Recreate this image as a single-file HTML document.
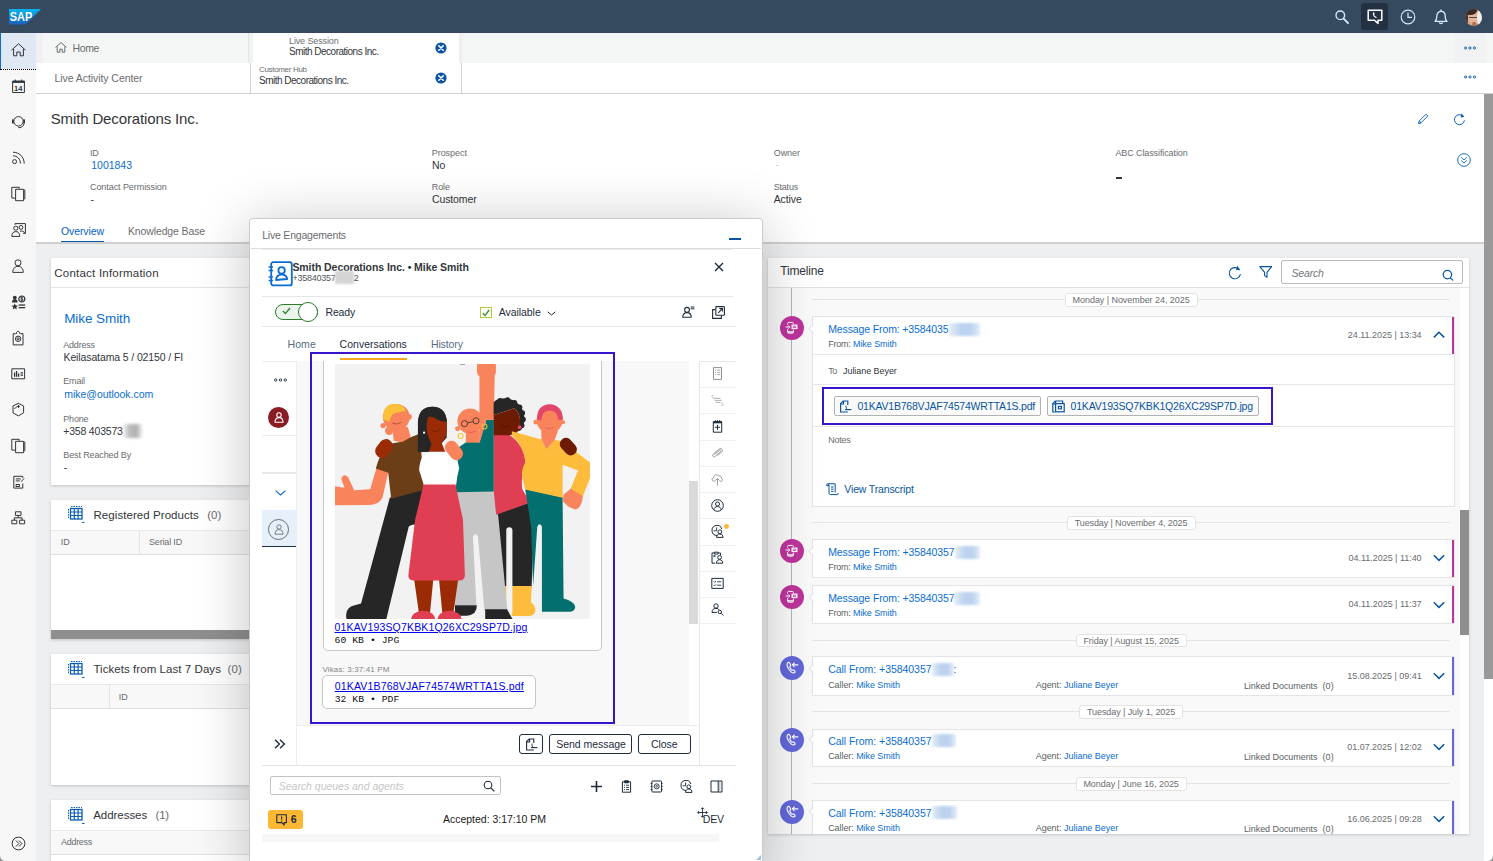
<!DOCTYPE html>
<html lang="en">
<head>
<meta charset="utf-8">
<title>Smith Decorations Inc.</title>
<style>
*{box-sizing:border-box;margin:0;padding:0}
html,body{width:1493px;height:861px;overflow:hidden;background:#fff}
body{font-family:"Liberation Sans",sans-serif;color:#32363a;font-size:12px;position:relative}
.abs{position:absolute}
.t{position:absolute;white-space:nowrap;line-height:1}
.lbl{color:#6a6d70;font-size:10px}
.val{color:#32363a;font-size:12px}
.lnk{color:#0a6ed1}
svg{position:absolute;overflow:visible}
#shell{left:0;top:0;width:1493px;height:33px;background:#354a5f}
#side{left:0;top:33px;width:36px;height:828px;background:#f7f7f7}
#tabs1{left:36px;top:33px;width:1457px;height:30px;background:#f4f6f6}
#tabs2{left:36px;top:63px;width:1457px;height:31px;background:#fff;border-bottom:1px solid #d0d0d0}
#hdr{left:36px;top:94px;width:1449px;height:148px;background:#fff}
#content{left:36px;top:243px;width:1449px;height:618px;background:#edeff0}
.card{position:absolute;background:#fff;box-shadow:0 0 2px rgba(0,0,0,.12)}
</style>
</head>
<body>
<div id="shell" class="abs"></div>
<div id="side" class="abs"></div>
<div id="tabs1" class="abs"></div>
<div id="tabs2" class="abs"></div>
<div id="hdr" class="abs"></div>
<div id="content" class="abs"></div>
<!-- shell bar -->
<svg class="abs" style="left:9px;top:9px" width="32" height="16" viewBox="0 0 32 16">
<defs><linearGradient id="sapg" x1="0" y1="0" x2="0" y2="1"><stop offset="0" stop-color="#00b5f0"/><stop offset="1" stop-color="#1f60bd"/></linearGradient></defs>
<polygon points="0,0 32,0 16.5,15.5 0,15.5" fill="url(#sapg)"/>
<text x=".8" y="12.300" font-family="Liberation Sans, sans-serif" font-weight="bold" font-size="12" fill="#fff" textLength="22.500" lengthAdjust="spacingAndGlyphs">SAP</text>
</svg>
<!-- search -->
<svg class="abs" style="left:1334px;top:9px" width="16" height="16" viewBox="0 0 16 16" fill="none" stroke="#d6e7fa" stroke-width="1.400"><circle cx="6.3" cy="6.3" r="4.3"/><path d="M9.6 9.6l4.4 4.4" stroke-linecap="round" stroke-width="1.8"/></svg>
<!-- active chat button -->
<div class="abs" style="left:1361px;top:3px;width:27px;height:27px;border-radius:3px;background:#233142"></div>
<svg class="abs" style="left:1367px;top:9px" width="16" height="16" viewBox="0 0 16 16"><path d="M1.2 1.2h13.6v10H11l-0 3.2-3.6-3.2H1.2z" fill="none" stroke="#fff" stroke-width="1.5" stroke-linejoin="round"/><path d="M6.800 3c-1.100.3-1.300 2.200-.4 3.800.9 1.600 2.400 2.600 3.400 2l-.8-1.400c-.5.200-1 0-1.400-.7-.4-.700-.4-1.400.1-1.700z" fill="#fff"/></svg>
<!-- clock -->
<svg class="abs" style="left:1400px;top:9px" width="16" height="16" viewBox="0 0 16 16" fill="none" stroke="#d6e7fa" stroke-width="1.200"><circle cx="8" cy="8" r="6.8"/><path d="M8 3.600v4.700h4" /></svg>
<!-- bell -->
<svg class="abs" style="left:1433px;top:9px" width="16" height="16" viewBox="0 0 16 16" fill="none" stroke="#d6e7fa" stroke-width="1.300"><path d="M2 12.300c1.500-1 1.800-2.500 1.800-5.300 0-2.700 1.800-4.600 4.200-4.600s4.200 1.900 4.200 4.600c0 2.800.3 4.300 1.800 5.300z" stroke-linejoin="round"/><path d="M6.400 13.800c.3.900 2.900.9 3.200 0" stroke-linecap="round"/><path d="M8 1v1.200" stroke-linecap="round"/></svg>
<!-- avatar -->
<div class="abs" style="left:1465px;top:9px;width:17px;height:17px;border-radius:50%;overflow:hidden;background:#c9977c">
<div class="abs" style="left:0;top:0;width:17px;height:17px;background:radial-gradient(ellipse 7px 8px at 8px 9px,#e2b59c 0 60%,rgba(226,181,156,0) 100%)"></div>
<div class="abs" style="left:-2px;top:-3px;width:14px;height:9px;border-radius:50%;background:#3a2822"></div>
<div class="abs" style="left:-3px;top:0;width:6px;height:17px;border-radius:40%;background:#4a352c"></div>
<div class="abs" style="left:12px;top:-1px;width:7px;height:19px;border-radius:45% 0 0 45%;background:#f1eeea"></div>
<div class="abs" style="left:4px;top:7.500px;width:8px;height:1px;background:#5b463d"></div>
<div class="abs" style="left:7px;top:13px;width:4px;height:4px;background:#b5694f;border-radius:50%"></div>
</div>
<!-- sidebar -->
<div class="abs" style="left:0;top:33px;width:36px;height:36px;background:#e0e8f3;border-left:1.5px solid #0a6ed1"></div>
<div class="abs" style="left:0;top:69px;width:36px;height:0;border-top:1px dotted #000"></div>
<svg class="abs" style="left:0;top:33px" width="36" height="828" viewBox="0 0 36 828" fill="none" stroke="#2f3439" stroke-width="1" stroke-linejoin="round">
<!-- home (center y 50-33=17) -->
<g transform="translate(11,10)"><path d="M.5 7.200L7.500.800l7 6.400"/><path d="M2.600 6v6.800h3.200V9h3.400v3.800h3.200V6"/></g>
<!-- calendar center y 86-33=53 -->
<g transform="translate(12,46.500)"><rect x=".6" y="1.600" width="11.800" height="11.400"/><path d="M.6 2.400h11.800" stroke-width="2"/><path d="M3.300 0v2M9.700 0v2"/><text x="2" y="11.200" font-family="Liberation Sans, sans-serif" font-size="7.500" font-weight="bold" fill="#2f3439" stroke="none" textLength="8.500">14</text></g>
<!-- headset center y 122-33=89 -->
<g transform="translate(11,82)"><circle cx="7.500" cy="6.300" r="4.700"/><rect x="1" y="4.300" width="1.800" height="4.200" rx=".6" fill="#2f3439" stroke="none"/><rect x="12.200" y="4.300" width="1.800" height="4.200" rx=".6" fill="#2f3439" stroke="none"/><path d="M13 8.600c-.4 2.600-2.200 3.900-4.600 3.900"/><circle cx="8" cy="12.500" r=".8" fill="#2f3439" stroke="none"/></g>
<!-- feed center y 158-33=125 -->
<g transform="translate(12,118)"><circle cx="2.600" cy="10.600" r="2"/><path d="M1 4.800c4.200 0 7.400 3.200 7.400 7.800"/><path d="M1 1.200c6.300 0 11.200 4.900 11.200 11.400"/></g>
<!-- copy docs center y 194-33=161 -->
<g transform="translate(11,153.500)"><path d="M4.200 11.600H.8V.8h7.400v1.400"/><rect x="4.600" y="2.800" width="8" height="11.400"/><path d="M13.800 3v9.800" stroke="#2f3439"/></g>
<!-- group center y 230-33=197 -->
<g transform="translate(11,190)"><path d="M4 1.800V.6h10.400v9.800h-2.200"/><circle cx="4.800" cy="5.200" r="2.100"/><path d="M.8 13.400c0-3.200 1.600-4.800 4-4.800s4 1.600 4 4.800z"/><circle cx="10" cy="4.400" r="1.900"/><path d="M9 8.200c2.400-.8 4.400.4 4.800 2.600"/></g>
<!-- person center y 266-33=233 -->
<g transform="translate(12,226)"><circle cx="6" cy="3.800" r="3"/><path d="M.8 13.400c0-4 2-6 5.200-6s5.200 2 5.200 6z"/></g>
<!-- competitor center y 302-33=269 -->
<g transform="translate(11,262)" fill="#2f3439" stroke="none"><circle cx="3.800" cy="2.600" r="1.900"/><path d="M.9 7.600c0-2.400 1.300-3.600 2.900-3.600s2.900 1.200 2.900 3.600z"/><circle cx="10.800" cy="4" r="3" fill="none" stroke="#2f3439" stroke-width="1.200"/><path d="M9.400 4.900c1 1 2.600.6 2.600-.3 0-1.200-2.400-.6-2.400-1.700 0-.9 1.600-1.200 2.400-.300M10.800 1.400v5.200" fill="none" stroke="#2f3439" stroke-width=".9"/><path d="M3.800 8.400l1 2.100 2.300.2-1.800 1.500.6 2.200-2.100-1.200-2.100 1.200.6-2.200L.5 10.700l2.300-.2z"/><rect x="7.600" y="9.400" width="6.600" height="1.300"/><rect x="7.600" y="12" width="6.600" height="1.300"/></g>
<!-- badge center y 338-33=305 -->
<g transform="translate(12,297.500)"><path d="M3.600 3.200H1.200v11.200h9.800V3.200H8.600"/><path d="M4.200 3.600c0-1.600.8-2.800 1.900-2.800s1.900 1.200 1.900 2.800"/><circle cx="6.100" cy="8.300" r="2.700"/><circle cx="6.100" cy="8.300" r="1.100"/></g>
<!-- chart center y 374-33=341 -->
<g transform="translate(11,335)"><rect x=".8" y=".8" width="12.800" height="10"/><path d="M3.600 8.800V4.400M5.600 8.800V3M7.600 8.800V5.400" stroke-width="1.300"/><path d="M9.600 4.800h2.400M9.600 7.200h2.400" stroke-width="1.300"/></g>
<!-- product center y 410-33=377 -->
<g transform="translate(12,369.500)"><path d="M6.300.8l5.300 2.700v6.800l-5.300 3.100L1 10.300V3.500z"/><path d="M2.600 6.400c1.200-2 2.800-2.800 4.800-2.400M5.800 2.600l1.800 1.400-1.600 1.400" stroke-width="1"/></g>
<!-- copy center y 446-33=413 -->
<g transform="translate(11,405.500)"><path d="M4.200 11.600H.8V.8h7.400v1.400"/><rect x="4.600" y="2.800" width="8" height="11.400"/><path d="M13.800 3v9.800"/></g>
<!-- request center y 482-33=449 -->
<g transform="translate(13,442.500)"><path d="M9.800 8v4.600H.8V.8h9v1.600"/><path d="M2.800 3.400h5M2.800 5.400h4"/><path d="M3 9h3.600v2H3z" stroke-width="1"/><path d="M8.200 6.200l3-3.400" stroke-width="1"/></g>
<!-- org center y 518-33=485 -->
<g transform="translate(11,478)"><rect x="4.400" y=".8" width="5.600" height="3.600"/><rect x=".8" y="9.200" width="5" height="3.600"/><rect x="8.600" y="9.200" width="5" height="3.600"/><path d="M7.200 4.400v2.400M3.300 9.200V6.800h7.800v2.400"/></g>
<!-- expand center y 843-33=810, x 18 -->
<g transform="translate(11.500,803.500)"><circle cx="7" cy="7" r="6.400" stroke-width="1"/><path d="M4.400 4l3 3-3 3M7.400 4l3 3-3 3" stroke-width="1"/></g>
</svg>
<div class="abs" style="left:36px;top:33px;width:6px;height:30px;background:#eef0f1;"></div>
<div class="abs" style="left:248px;top:33px;width:1px;height:30px;background:#e3e5e6;"></div>
<div class="abs" style="left:249px;top:33px;width:4px;height:30px;background:#f0f2f3;"></div>
<div class="abs" style="left:253px;top:33px;width:206px;height:30px;background:#fff;"></div>
<div class="abs" style="left:459px;top:33px;width:3px;height:30px;background:#eef0f1;"></div>
<svg class="abs" style="left:54.500px;top:41.500px" width="12" height="11" viewBox="0 0 12 11" fill="none" stroke="#6a6d70" stroke-width="1" stroke-linejoin="round"><path d="M.5 5.400L6 .6l5.500 4.800"/><path d="M2.200 4.600v5.600h2.600V7.200h2.400v3h2.600V4.600"/></svg>
<div class="t" style="left:72.6px;top:43.00px;font-size:10.5px;color:#6a6d70;letter-spacing:-0.402px;">Home</div>
<div class="t" style="left:289.0px;top:37.00px;font-size:9px;color:#6a6d70;letter-spacing:-0.127px;">Live Session</div>
<div class="t" style="left:289.0px;top:47.00px;font-size:10px;color:#32363a;letter-spacing:-0.504px;">Smith Decorations Inc.</div>
<svg class="abs" style="left:435px;top:41.8px" width="12" height="12" viewBox="0 0 12 12"><circle cx="6" cy="6" r="5.600" fill="#0854a0"/><path d="M3.800 3.800l4.400 4.400M8.200 3.800l-4.400 4.400" stroke="#fff" stroke-width="1.600" stroke-linecap="round"/></svg>
<svg class="abs" style="left:435px;top:71.8px" width="12" height="12" viewBox="0 0 12 12"><circle cx="6" cy="6" r="5.600" fill="#0854a0"/><path d="M3.800 3.800l4.400 4.400M8.200 3.800l-4.400 4.400" stroke="#fff" stroke-width="1.600" stroke-linecap="round"/></svg>
<div class="abs" style="left:250px;top:63px;width:1px;height:30px;background:#d5d5d5;"></div>
<div class="abs" style="left:461px;top:63px;width:1px;height:30px;background:#d5d5d5;"></div>
<div class="t" style="left:54.5px;top:73.00px;font-size:10.5px;color:#6a6d70;letter-spacing:-0.064px;">Live Activity Center</div>
<div class="t" style="left:259.0px;top:66.00px;font-size:8px;color:#6a6d70;letter-spacing:-0.323px;">Customer Hub</div>
<div class="t" style="left:259.0px;top:76.00px;font-size:10px;color:#32363a;letter-spacing:-0.504px;">Smith Decorations Inc.</div>
<div class="abs" style="left:1455px;top:33px;width:30px;height:30px;background:#f0f2f3;"></div>
<svg class="abs" style="left:1463.5px;top:46.2px" width="12" height="4" viewBox="0 0 12 4" fill="none" stroke="#0854a0" stroke-width=".9"><circle cx="1.6" cy="2" r="1.100"/><circle cx="6" cy="2" r="1.100"/><circle cx="10.4" cy="2" r="1.100"/></svg>
<svg class="abs" style="left:1463.5px;top:75.4px" width="12" height="4" viewBox="0 0 12 4" fill="none" stroke="#0854a0" stroke-width=".9"><circle cx="1.6" cy="2" r="1.100"/><circle cx="6" cy="2" r="1.100"/><circle cx="10.4" cy="2" r="1.100"/></svg>
<div class="t" style="left:50.7px;top:111.00px;font-size:15px;color:#32363a;letter-spacing:-0.131px;">Smith Decorations Inc.</div>
<div class="t" style="left:90.0px;top:149.00px;font-size:9px;color:#6a6d70;letter-spacing:-0.250px;">ID</div>
<div class="t" style="left:91.3px;top:160.00px;font-size:10.5px;color:#0a6ed1;letter-spacing:-0.025px;">1001843</div>
<div class="t" style="left:90.0px;top:183.00px;font-size:9px;color:#6a6d70;letter-spacing:-0.074px;">Contact Permission</div>
<div class="t" style="left:90.5px;top:194.00px;font-size:10.5px;color:#32363a;">-</div>
<div class="t" style="left:431.7px;top:149.00px;font-size:9px;color:#6a6d70;letter-spacing:-0.027px;">Prospect</div>
<div class="t" style="left:432.0px;top:160.00px;font-size:10.5px;color:#32363a;letter-spacing:0.039px;">No</div>
<div class="t" style="left:431.7px;top:183.00px;font-size:9px;color:#6a6d70;letter-spacing:-0.052px;">Role</div>
<div class="t" style="left:432.0px;top:194.00px;font-size:10.5px;color:#32363a;letter-spacing:-0.126px;">Customer</div>
<div class="t" style="left:773.7px;top:149.00px;font-size:9px;color:#6a6d70;letter-spacing:-0.041px;">Owner</div>
<div class="t" style="left:775.5px;top:161.00px;font-size:9px;color:#9cc3e8;">-</div>
<div class="t" style="left:773.7px;top:183.00px;font-size:9px;color:#6a6d70;letter-spacing:-0.202px;">Status</div>
<div class="t" style="left:773.7px;top:194.00px;font-size:10.5px;color:#32363a;letter-spacing:-0.099px;">Active</div>
<div class="t" style="left:1115.4px;top:149.00px;font-size:9px;color:#6a6d70;letter-spacing:-0.101px;">ABC Classification</div>
<div class="abs" style="left:1116px;top:177px;width:6px;height:2px;background:#32363a;"></div>
<svg class="abs" style="left:1417px;top:113px" width="12" height="12" viewBox="0 0 12 12" fill="none" stroke="#0a5cb8" stroke-width=".9"><path d="M1.600 10.400l.6-2.400L9 1.200l1.800 1.800L4 9.800z" stroke-linejoin="round"/><path d="M1.600 10.400l2.400-.6" /><path d="M2.400 8l1.600 1.600" /></svg>
<svg class="abs" style="left:1453px;top:112.500px" width="13" height="13" viewBox="0 0 13 13" fill="none" stroke="#0a5cb8" stroke-width="1"><path d="M10.800 4.200A5 5 0 1 0 11.400 7.400" /><path d="M8.600 .6l2.600 3.200-3.600.8" fill="#0854a0" stroke="none"/></svg>
<svg class="abs" style="left:1457px;top:153px" width="14" height="14" viewBox="0 0 14 14" fill="none" stroke="#0a5cb8" stroke-width=".9"><circle cx="7" cy="7" r="6.300"/><path d="M4.200 4.400l2.800 2.600 2.800-2.600M4.200 7.400l2.800 2.600 2.800-2.600"/></svg>
<div class="t" style="left:61.0px;top:226.00px;font-size:10.5px;color:#0a62c4;letter-spacing:-0.095px;">Overview</div>
<div class="abs" style="left:61px;top:240.5px;width:43px;height:1.5px;background:#0a5cb8;"></div>
<div class="t" style="left:128.0px;top:226.00px;font-size:10.5px;color:#6a6d70;letter-spacing:-0.129px;">Knowledge Base</div>
<div class="abs" style="left:36px;top:242px;width:1449px;height:1.5px;background:#cfcfcf;"></div>
<div class="abs" style="left:51px;top:258px;width:300px;height:227px;background:#fff;box-shadow:0 1px 3px rgba(0,0,0,.18);"></div>
<div class="t" style="left:54.3px;top:268.00px;font-size:11.5px;color:#32363a;letter-spacing:0.219px;">Contact Information</div>
<div class="abs" style="left:51px;top:287px;width:300px;height:1px;background:#e4e4e4;"></div>
<div class="t" style="left:64.2px;top:312.00px;font-size:13.5px;color:#0a6ed1;letter-spacing:-0.076px;">Mike Smith</div>
<div class="t" style="left:63.3px;top:341.00px;font-size:9px;color:#6a6d70;letter-spacing:-0.216px;">Address</div>
<div class="t" style="left:63.5px;top:352.00px;font-size:10.5px;color:#32363a;letter-spacing:-0.118px;">Keilasatama 5 / 02150 / FI</div>
<div class="t" style="left:63.3px;top:377.00px;font-size:9px;color:#6a6d70;letter-spacing:-0.201px;">Email</div>
<div class="t" style="left:64.2px;top:389.00px;font-size:10.5px;color:#0a6ed1;letter-spacing:-0.027px;">mike@outlook.com</div>
<div class="t" style="left:63.3px;top:415.00px;font-size:9px;color:#6a6d70;letter-spacing:-0.205px;">Phone</div>
<div class="t" style="left:63.3px;top:426.00px;font-size:10.5px;color:#32363a;letter-spacing:-0.200px;">+358 403573</div>
<div class="abs" style="left:122px;top:424px;width:21px;height:14px;background:linear-gradient(90deg,rgba(200,200,200,.0),#bdbdbd 35%,#b0b0b0 70%,rgba(200,200,200,0));filter:blur(1.500px)"></div>
<div class="t" style="left:63.3px;top:451.00px;font-size:9px;color:#6a6d70;letter-spacing:-0.122px;">Best Reached By</div>
<div class="t" style="left:63.8px;top:462.00px;font-size:10.5px;color:#32363a;">-</div>
<div class="abs" style="left:51px;top:500px;width:300px;height:139px;background:#fff;box-shadow:0 1px 3px rgba(0,0,0,.18);"></div>
<svg class="abs" style="left:67.5px;top:506px" width="17" height="18" viewBox="0 0 17 18" fill="none" stroke="#0b5cb3"><path d="M3 .5h11" stroke-width="1" stroke-dasharray="1.500 1"/><path d="M.5 3v10" stroke-width="1" stroke-dasharray="1.500 1"/><rect x="2.500" y="2.500" width="11.500" height="10.500" stroke-width="1.300"/><path d="M6.300 2.500v10.500M10.100 2.500v10.500M2.500 6v0h11.500M2.500 9.500h11.500" stroke-width="1.200"/><path d="M14 16.500h2.500" stroke-width="1"/></svg>
<div class="t" style="left:93.5px;top:510.00px;font-size:11.5px;color:#32363a;letter-spacing:0.064px;">Registered Products</div>
<div class="t" style="left:207.2px;top:510.00px;font-size:11.5px;color:#6a6d70;letter-spacing:-0.018px;">(0)</div>
<div class="abs" style="left:51px;top:530px;width:300px;height:25px;background:#f8f8f8;border-top:1px solid #e8e8e8;border-bottom:1px solid #e0e0e0;"></div>
<div class="abs" style="left:139px;top:531px;width:1px;height:23px;background:#e4e4e4;"></div>
<div class="t" style="left:60.8px;top:538.00px;font-size:9px;color:#6a6d70;letter-spacing:-0.150px;">ID</div>
<div class="t" style="left:149.0px;top:538.00px;font-size:9px;color:#6a6d70;letter-spacing:-0.168px;">Serial ID</div>
<div class="abs" style="left:51px;top:630px;width:300px;height:9px;background:#8f8f8f;"></div>
<div class="abs" style="left:51px;top:654px;width:300px;height:131px;background:#fff;box-shadow:0 1px 3px rgba(0,0,0,.18);"></div>
<svg class="abs" style="left:67.5px;top:661px" width="17" height="18" viewBox="0 0 17 18" fill="none" stroke="#0b5cb3"><path d="M3 .5h11" stroke-width="1" stroke-dasharray="1.500 1"/><path d="M.5 3v10" stroke-width="1" stroke-dasharray="1.500 1"/><rect x="2.500" y="2.500" width="11.500" height="10.500" stroke-width="1.300"/><path d="M6.300 2.500v10.500M10.100 2.500v10.500M2.500 6v0h11.500M2.500 9.500h11.500" stroke-width="1.200"/><path d="M14 16.500h2.500" stroke-width="1"/></svg>
<div class="t" style="left:93.4px;top:664.00px;font-size:11.5px;color:#32363a;letter-spacing:0.062px;">Tickets from Last 7 Days</div>
<div class="t" style="left:227.4px;top:664.00px;font-size:11.5px;color:#6a6d70;letter-spacing:0.182px;">(0)</div>
<div class="abs" style="left:51px;top:684px;width:300px;height:25px;background:#f8f8f8;border-top:1px solid #e8e8e8;border-bottom:1px solid #e0e0e0;"></div>
<div class="abs" style="left:109px;top:685px;width:1px;height:23px;background:#e4e4e4;"></div>
<div class="t" style="left:118.8px;top:693.00px;font-size:9px;color:#6a6d70;letter-spacing:-0.150px;">ID</div>
<div class="abs" style="left:51px;top:800px;width:300px;height:70px;background:#fff;box-shadow:0 1px 3px rgba(0,0,0,.18);"></div>
<svg class="abs" style="left:67.5px;top:806.5px" width="17" height="18" viewBox="0 0 17 18" fill="none" stroke="#0b5cb3"><path d="M3 .5h11" stroke-width="1" stroke-dasharray="1.500 1"/><path d="M.5 3v10" stroke-width="1" stroke-dasharray="1.500 1"/><rect x="2.500" y="2.500" width="11.500" height="10.500" stroke-width="1.300"/><path d="M6.300 2.500v10.500M10.100 2.500v10.500M2.500 6v0h11.500M2.500 9.500h11.500" stroke-width="1.200"/><path d="M14 16.500h2.500" stroke-width="1"/></svg>
<div class="t" style="left:93.2px;top:810.00px;font-size:11.5px;color:#32363a;letter-spacing:-0.037px;">Addresses</div>
<div class="t" style="left:155.5px;top:810.00px;font-size:11.5px;color:#6a6d70;letter-spacing:-0.184px;">(1)</div>
<div class="abs" style="left:51px;top:830px;width:300px;height:25px;background:#f8f8f8;border-top:1px solid #e8e8e8;border-bottom:1px solid #e0e0e0;"></div>
<div class="t" style="left:61.0px;top:838.00px;font-size:9px;color:#6a6d70;letter-spacing:-0.288px;">Address</div>
<div class="abs" style="left:768px;top:258px;width:701px;height:576px;background:#f9f9f9;box-shadow:0 1px 3px rgba(0,0,0,.18);overflow:hidden;"></div>
<div class="abs" style="left:768px;top:258px;width:701px;height:29px;background:#fff;"></div>
<div class="abs" style="left:768px;top:287px;width:701px;height:1px;background:#e2e2e2;"></div>
<div class="t" style="left:780.3px;top:265.00px;font-size:12px;color:#32363a;letter-spacing:-0.187px;">Timeline</div>
<svg class="abs" style="left:1228px;top:265px" width="14" height="15" viewBox="0 0 14 15" fill="none" stroke="#0854a0" stroke-width="1.100"><path d="M11.600 5.200A5.600 5.600 0 1 0 12.400 9"/><path d="M9.200 .8l2.800 3.800-4 .6" fill="#0854a0" stroke="none"/></svg>
<svg class="abs" style="left:1259px;top:266px" width="14" height="12" viewBox="0 0 14 12" fill="none" stroke="#0854a0" stroke-width="1.100" stroke-linejoin="round"><path d="M.8.600h11.800L8 6.400v4.800L5.600 9.600V6.400z"/></svg>
<div class="abs" style="left:1281px;top:260px;width:182px;height:24px;background:#fff;border:1px solid #b9b9b9;border-radius:2px;"></div>
<div class="t" style="left:1291.5px;top:268.00px;font-size:10.5px;color:#74777a;font-style:italic;letter-spacing:-0.178px;">Search</div>
<svg class="abs" style="left:1442px;top:269px" width="12" height="12" viewBox="0 0 12 12" fill="none" stroke="#0854a0" stroke-width="1.200"><circle cx="5.400" cy="5.600" r="4.200"/><path d="M8.400 8.800l2.400 2.400" stroke-linecap="round"/></svg>
<div class="abs" style="left:1460px;top:288px;width:9px;height:546px;background:#fff;"></div>
<div class="abs" style="left:1460px;top:510px;width:9px;height:124.5px;background:#8f8f8f;"></div>
<div class="abs" style="left:791px;top:288px;width:1px;height:546px;background:#b2b5b7;"></div>
<div class="abs" style="left:812px;top:299px;width:638px;height:1px;background:#e4e4e4;"></div>
<div class="abs" style="left:1064.5px;top:292.5px;width:133.20000000000005px;height:14.199999999999989px;background:#fff;border:1px solid #e3e3e3;border-radius:3px;"></div>
<div class="t" style="left:1072.6px;top:296.00px;font-size:9px;color:#6a6d70;letter-spacing:-0.054px;">Monday | November 24, 2025</div>
<div class="abs" style="left:812px;top:316px;width:643px;height:190.5px;background:#fff;border:1px solid #e4e4e4;"></div>
<div class="abs" style="left:1452px;top:316.5px;width:2.2px;height:37px;background:#bd349c;"></div>
<div class="abs" style="left:780px;top:316px;width:24px;height:24px;border-radius:50%;background:#bd349c"></div>
<svg class="abs" style="left:785px;top:321px" width="14" height="14" viewBox="0 0 14 14" fill="none" stroke="#fff" stroke-width="1"><path d="M2.600 3.600V2.400c0-.6.400-1 1-1h3.800c.6 0 1 .4 1 1v.8M2.600 8v3.200c0 .6.400 1 1 1h3.800c.6 0 1-.4 1-1V8.600"/><path d="M2.600 10.200h5.800v1.400H2.600z" fill="#fff" stroke="none"/><path d="M.6 6h4M3.200 4.400L4.800 6 3.200 7.600"/><rect x="6.500" y="3.500" width="6" height="4.600" fill="#fff" stroke="none"/><path d="M7.800 5.200h3.400M7.800 6.600h3.400" stroke="#bd349c" stroke-width=".8"/></svg>
<svg class="abs" style="left:808px;top:323.5px" width="6" height="9" viewBox="0 0 6 9"><path d="M5.500 .3L1 4.500l4.500 4.200" fill="#fff" stroke="#dcdcdc" stroke-width="1"/><path d="M5.500 1v7" stroke="#fff" stroke-width="1.200"/></svg>
<div class="t" style="left:828.2px;top:324.00px;font-size:10.5px;color:#0a6ed1;letter-spacing:-0.121px;">Message From: +3584035</div>
<div class="abs" style="left:949px;top:323px;width:31px;height:13px;background:linear-gradient(90deg,#e4edf8,#b9d0ee 40%,#b9d0ee 70%,#e4edf8);filter:blur(1.300px);opacity:.95"></div>
<div class="t" style="left:828.2px;top:340.00px;font-size:9px;color:#5b5f63;letter-spacing:-0.239px;">From:</div>
<div class="t" style="left:853.0px;top:340.00px;font-size:9px;color:#0a6ed1;letter-spacing:-0.071px;">Mike Smith</div>
<div class="t" style="left:1347.8px;top:331.00px;font-size:9px;color:#6a6d70;letter-spacing:-0.024px;">24.11.2025 | 13:34</div>
<svg class="abs" style="left:1433px;top:331.2px" width="12" height="8" viewBox="0 0 12 8" fill="none" stroke="#0854a0" stroke-width="1.500"><path d="M.8 6.400L6 1.200l5.200 5.200"/></svg>
<div class="abs" style="left:813px;top:354px;width:641px;height:1px;background:#e6e6e6;"></div>
<div class="t" style="left:828.2px;top:367.00px;font-size:9px;color:#6a6d70;letter-spacing:-0.452px;">To</div>
<div class="t" style="left:843.0px;top:367.00px;font-size:9px;color:#32363a;letter-spacing:-0.056px;">Juliane Beyer</div>
<div class="abs" style="left:813px;top:384px;width:641px;height:1px;background:#e6e6e6;"></div>
<div class="abs" style="left:822px;top:387px;width:451px;height:38px;border:2px solid #3a14cc;"></div>
<div class="abs" style="left:834px;top:396px;width:207px;height:19.5px;background:#fafafa;border:1px solid #b2b2b2;border-radius:2px;"></div>
<svg class="abs" style="left:839px;top:399.500px" width="13" height="13" viewBox="0 0 13 13" fill="none" stroke="#0854a0" stroke-width="1.200"><path d="M8.800 12H1.600V3.600L4.200 1h4.600v4"/><path d="M4.600 1v3H1.600"/><path d="M6 9.600h6.400" /><path d="M7 5.600c0 1.800 0 2.800 1.200 3.800" stroke-width="1"/></svg>
<div class="t" style="left:857.4px;top:401.00px;font-size:10.5px;color:#0854a0;letter-spacing:-0.208px;">01KAV1B768VJAF74574WRTTA1S.pdf</div>
<div class="abs" style="left:1047px;top:396px;width:212px;height:19.5px;background:#fafafa;border:1px solid #b2b2b2;border-radius:2px;"></div>
<svg class="abs" style="left:1052px;top:399.500px" width="13" height="13" viewBox="0 0 13 13" fill="none" stroke="#0854a0" stroke-width="1.200"><path d="M3 12H.8V3.400L3.200 1h7.400v2"/><path d="M3.600 1v2.800H.8"/><rect x="3.600" y="3.600" width="8.600" height="8.200"/><rect x="5.800" y="5.800" width="4.200" height="3.600" fill="#0854a0" stroke="none"/><circle cx="7.900" cy="7.600" r=".9" fill="#fff" stroke="none"/></svg>
<div class="t" style="left:1070.5px;top:401.00px;font-size:10.5px;color:#0854a0;letter-spacing:-0.178px;">01KAV193SQ7KBK1Q26XC29SP7D.jpg</div>
<div class="abs" style="left:813px;top:426px;width:641px;height:1px;background:#e6e6e6;"></div>
<div class="t" style="left:828.2px;top:436.00px;font-size:9px;color:#6a6d70;letter-spacing:-0.242px;">Notes</div>
<svg class="abs" style="left:826px;top:482.500px" width="13" height="13" viewBox="0 0 13 13" fill="none" stroke="#0854a0" stroke-width="1"><path d="M3 2.600V10c0 1 .6 1.600 1.600 1.600h7M3 2.600C3 1.400 2.400.8 1.600.8S.6 1.400.6 2.600zM1.600.8h7.600v8.600"/><path d="M5 4h2.600M5 6.200h2.600M5 8.400h2.600"/><path d="M12 10v1.600" /></svg>
<div class="t" style="left:844.3px;top:484.00px;font-size:10.5px;color:#0854a0;letter-spacing:-0.145px;">View Transcript</div>
<div class="abs" style="left:812px;top:522px;width:638px;height:1px;background:#e4e4e4;"></div>
<div class="abs" style="left:1066.5px;top:515.8px;width:129.0999999999999px;height:13.800000000000068px;background:#fff;border:1px solid #e3e3e3;border-radius:3px;"></div>
<div class="t" style="left:1074.7px;top:519.00px;font-size:9px;color:#6a6d70;letter-spacing:-0.110px;">Tuesday | November 4, 2025</div>
<div class="abs" style="left:812px;top:539px;width:643px;height:38.5px;background:#fff;border:1px solid #e4e4e4;"></div>
<div class="abs" style="left:1452px;top:539.5px;width:2.2px;height:37.5px;background:#bd349c;"></div>
<div class="abs" style="left:780px;top:539px;width:24px;height:24px;border-radius:50%;background:#bd349c"></div>
<svg class="abs" style="left:785px;top:544px" width="14" height="14" viewBox="0 0 14 14" fill="none" stroke="#fff" stroke-width="1"><path d="M2.600 3.600V2.400c0-.6.400-1 1-1h3.800c.6 0 1 .4 1 1v.8M2.600 8v3.200c0 .6.400 1 1 1h3.800c.6 0 1-.4 1-1V8.600"/><path d="M2.600 10.200h5.800v1.400H2.600z" fill="#fff" stroke="none"/><path d="M.6 6h4M3.200 4.400L4.800 6 3.200 7.600"/><rect x="6.500" y="3.500" width="6" height="4.600" fill="#fff" stroke="none"/><path d="M7.800 5.200h3.400M7.800 6.600h3.400" stroke="#bd349c" stroke-width=".8"/></svg>
<svg class="abs" style="left:808px;top:546.5px" width="6" height="9" viewBox="0 0 6 9"><path d="M5.500 .3L1 4.500l4.500 4.200" fill="#fff" stroke="#dcdcdc" stroke-width="1"/><path d="M5.500 1v7" stroke="#fff" stroke-width="1.200"/></svg>
<div class="t" style="left:828.2px;top:547.00px;font-size:10.5px;color:#0a6ed1;letter-spacing:-0.104px;">Message From: +35840357</div>
<div class="abs" style="left:955px;top:546px;width:25px;height:13px;background:linear-gradient(90deg,#e4edf8,#b9d0ee 40%,#b9d0ee 70%,#e4edf8);filter:blur(1.300px);opacity:.95"></div>
<div class="t" style="left:828.2px;top:563.00px;font-size:9px;color:#5b5f63;letter-spacing:-0.239px;">From:</div>
<div class="t" style="left:853.0px;top:563.00px;font-size:9px;color:#0a6ed1;letter-spacing:-0.071px;">Mike Smith</div>
<div class="t" style="left:1348.5px;top:554.00px;font-size:9px;color:#6a6d70;letter-spacing:-0.026px;">04.11.2025 | 11:40</div>
<svg class="abs" style="left:1433px;top:554.4000000000001px" width="12" height="8" viewBox="0 0 12 8" fill="none" stroke="#0854a0" stroke-width="1.500"><path d="M.8 1.200L6 6.400l5.200-5.200"/></svg>
<div class="abs" style="left:812px;top:585px;width:643px;height:38.5px;background:#fff;border:1px solid #e4e4e4;"></div>
<div class="abs" style="left:1452px;top:585.5px;width:2.2px;height:37.5px;background:#bd349c;"></div>
<div class="abs" style="left:780px;top:585px;width:24px;height:24px;border-radius:50%;background:#bd349c"></div>
<svg class="abs" style="left:785px;top:590px" width="14" height="14" viewBox="0 0 14 14" fill="none" stroke="#fff" stroke-width="1"><path d="M2.600 3.600V2.400c0-.6.400-1 1-1h3.800c.6 0 1 .4 1 1v.8M2.600 8v3.200c0 .6.400 1 1 1h3.800c.6 0 1-.4 1-1V8.600"/><path d="M2.600 10.200h5.800v1.400H2.600z" fill="#fff" stroke="none"/><path d="M.6 6h4M3.200 4.400L4.800 6 3.200 7.600"/><rect x="6.500" y="3.500" width="6" height="4.600" fill="#fff" stroke="none"/><path d="M7.800 5.200h3.400M7.800 6.600h3.400" stroke="#bd349c" stroke-width=".8"/></svg>
<svg class="abs" style="left:808px;top:592.5px" width="6" height="9" viewBox="0 0 6 9"><path d="M5.500 .3L1 4.500l4.500 4.200" fill="#fff" stroke="#dcdcdc" stroke-width="1"/><path d="M5.500 1v7" stroke="#fff" stroke-width="1.200"/></svg>
<div class="t" style="left:828.2px;top:593.00px;font-size:10.5px;color:#0a6ed1;letter-spacing:-0.104px;">Message From: +35840357</div>
<div class="abs" style="left:954px;top:592px;width:26px;height:13px;background:linear-gradient(90deg,#e4edf8,#b9d0ee 40%,#b9d0ee 70%,#e4edf8);filter:blur(1.300px);opacity:.95"></div>
<div class="t" style="left:828.2px;top:609.00px;font-size:9px;color:#5b5f63;letter-spacing:-0.239px;">From:</div>
<div class="t" style="left:853.0px;top:609.00px;font-size:9px;color:#0a6ed1;letter-spacing:-0.071px;">Mike Smith</div>
<div class="t" style="left:1348.5px;top:600.00px;font-size:9px;color:#6a6d70;letter-spacing:-0.026px;">04.11.2025 | 11:37</div>
<svg class="abs" style="left:1433px;top:601.2px" width="12" height="8" viewBox="0 0 12 8" fill="none" stroke="#0854a0" stroke-width="1.500"><path d="M.8 1.200L6 6.400l5.200-5.200"/></svg>
<div class="abs" style="left:812px;top:640px;width:638px;height:1px;background:#e4e4e4;"></div>
<div class="abs" style="left:1075.5px;top:633.6px;width:111.20000000000005px;height:13.799999999999955px;background:#fff;border:1px solid #e3e3e3;border-radius:3px;"></div>
<div class="t" style="left:1083.4px;top:637.00px;font-size:9px;color:#6a6d70;letter-spacing:-0.083px;">Friday | August 15, 2025</div>
<div class="abs" style="left:812px;top:656px;width:643px;height:39.5px;background:#fff;border:1px solid #e4e4e4;"></div>
<div class="abs" style="left:1452px;top:656.5px;width:2.2px;height:38.5px;background:#6367d8;"></div>
<div class="abs" style="left:780px;top:656px;width:24px;height:24px;border-radius:50%;background:#6367d8"></div>
<svg class="abs" style="left:785px;top:661px" width="14" height="14" viewBox="0 0 14 14" fill="none" stroke="#fff" stroke-width="1.150" stroke-linecap="round" stroke-linejoin="round"><path d="M3 1.600c-1.400.5-1.300 3.400.7 6.400s4.400 4.300 5.800 3.700c.7-.4.800-1 .3-1.700L8.600 8.800c-.5.100-1 .6-1.500.4C6.200 8.800 4.800 6.600 4.800 5.600c.1-.6.800-.7 1-1.200L4.800 2.200C4.400 1.600 3.700 1.300 3 1.600z"/><path d="M7.400 3.800h5.400M9.200 2l-1.800 1.800 1.800 1.800"/></svg>
<svg class="abs" style="left:808px;top:663.5px" width="6" height="9" viewBox="0 0 6 9"><path d="M5.500 .3L1 4.500l4.500 4.200" fill="#fff" stroke="#dcdcdc" stroke-width="1"/><path d="M5.500 1v7" stroke="#fff" stroke-width="1.200"/></svg>
<div class="t" style="left:828.2px;top:664.00px;font-size:10.5px;color:#0a6ed1;letter-spacing:-0.044px;">Call From: +35840357</div>
<div class="abs" style="left:932px;top:662.8px;width:22px;height:13px;background:linear-gradient(90deg,#e4edf8,#b9d0ee 40%,#b9d0ee 70%,#e4edf8);filter:blur(1.300px);opacity:.95"></div>
<div class="t" style="left:828.2px;top:681.00px;font-size:9px;color:#5b5f63;letter-spacing:-0.072px;">Caller:</div>
<div class="t" style="left:856.2px;top:681.00px;font-size:9px;color:#0a6ed1;letter-spacing:-0.071px;">Mike Smith</div>
<div class="t" style="left:1035.8px;top:681.00px;font-size:9px;color:#5b5f63;letter-spacing:-0.086px;">Agent:</div>
<div class="t" style="left:1064.1px;top:681.00px;font-size:9px;color:#0a6ed1;letter-spacing:-0.041px;">Juliane Beyer</div>
<div class="t" style="left:1243.9px;top:682.00px;font-size:9px;color:#5b5f63;letter-spacing:-0.058px;">Linked Documents</div>
<div class="t" style="left:1322.5px;top:682.00px;font-size:9px;color:#5b5f63;letter-spacing:0.067px;">(0)</div>
<div class="t" style="left:1347.3px;top:672.00px;font-size:9px;color:#6a6d70;letter-spacing:-0.033px;">15.08.2025 | 09:41</div>
<svg class="abs" style="left:1433px;top:672.0px" width="12" height="8" viewBox="0 0 12 8" fill="none" stroke="#0854a0" stroke-width="1.500"><path d="M.8 1.200L6 6.400l5.200-5.200"/></svg>
<div class="t" style="left:953.5px;top:664.00px;font-size:10.5px;color:#0a6ed1;">:</div>
<div class="abs" style="left:812px;top:711px;width:638px;height:1px;background:#e4e4e4;"></div>
<div class="abs" style="left:1078.6px;top:705.4px;width:104.90000000000009px;height:13.899999999999977px;background:#fff;border:1px solid #e3e3e3;border-radius:3px;"></div>
<div class="t" style="left:1087.0px;top:708.00px;font-size:9px;color:#6a6d70;letter-spacing:-0.089px;">Tuesday | July 1, 2025</div>
<div class="abs" style="left:812px;top:728.5px;width:643px;height:38.0px;background:#fff;border:1px solid #e4e4e4;"></div>
<div class="abs" style="left:1452px;top:729.0px;width:2.2px;height:37.0px;background:#6367d8;"></div>
<div class="abs" style="left:780px;top:727.7px;width:24px;height:24px;border-radius:50%;background:#6367d8"></div>
<svg class="abs" style="left:785px;top:732.7px" width="14" height="14" viewBox="0 0 14 14" fill="none" stroke="#fff" stroke-width="1.150" stroke-linecap="round" stroke-linejoin="round"><path d="M3 1.600c-1.400.5-1.300 3.400.7 6.400s4.400 4.300 5.800 3.700c.7-.4.800-1 .3-1.700L8.600 8.800c-.5.100-1 .6-1.500.4C6.200 8.800 4.800 6.600 4.800 5.600c.1-.6.800-.7 1-1.200L4.800 2.200C4.400 1.600 3.700 1.300 3 1.600z"/><path d="M7.400 3.800h5.400M9.200 2l-1.800 1.800 1.800 1.800"/></svg>
<svg class="abs" style="left:808px;top:735.2px" width="6" height="9" viewBox="0 0 6 9"><path d="M5.500 .3L1 4.500l4.500 4.200" fill="#fff" stroke="#dcdcdc" stroke-width="1"/><path d="M5.500 1v7" stroke="#fff" stroke-width="1.200"/></svg>
<div class="t" style="left:828.2px;top:736.00px;font-size:10.5px;color:#0a6ed1;letter-spacing:-0.044px;">Call From: +35840357</div>
<div class="abs" style="left:932px;top:734.2px;width:24px;height:13px;background:linear-gradient(90deg,#e4edf8,#b9d0ee 40%,#b9d0ee 70%,#e4edf8);filter:blur(1.300px);opacity:.95"></div>
<div class="t" style="left:828.2px;top:752.00px;font-size:9px;color:#5b5f63;letter-spacing:-0.072px;">Caller:</div>
<div class="t" style="left:856.2px;top:752.00px;font-size:9px;color:#0a6ed1;letter-spacing:-0.071px;">Mike Smith</div>
<div class="t" style="left:1035.8px;top:752.00px;font-size:9px;color:#5b5f63;letter-spacing:-0.086px;">Agent:</div>
<div class="t" style="left:1064.1px;top:752.00px;font-size:9px;color:#0a6ed1;letter-spacing:-0.041px;">Juliane Beyer</div>
<div class="t" style="left:1243.9px;top:753.00px;font-size:9px;color:#5b5f63;letter-spacing:-0.058px;">Linked Documents</div>
<div class="t" style="left:1322.5px;top:753.00px;font-size:9px;color:#5b5f63;letter-spacing:0.067px;">(0)</div>
<div class="t" style="left:1347.3px;top:743.00px;font-size:9px;color:#6a6d70;letter-spacing:-0.033px;">01.07.2025 | 12:02</div>
<svg class="abs" style="left:1433px;top:742.8000000000001px" width="12" height="8" viewBox="0 0 12 8" fill="none" stroke="#0854a0" stroke-width="1.500"><path d="M.8 1.200L6 6.400l5.200-5.200"/></svg>
<div class="abs" style="left:812px;top:783px;width:638px;height:1px;background:#e4e4e4;"></div>
<div class="abs" style="left:1075.5px;top:776.9px;width:111.20000000000005px;height:13.800000000000068px;background:#fff;border:1px solid #e3e3e3;border-radius:3px;"></div>
<div class="t" style="left:1083.4px;top:780.00px;font-size:9px;color:#6a6d70;letter-spacing:-0.045px;">Monday | June 16, 2025</div>
<div class="abs" style="left:0;top:0;width:1493px;height:834px;overflow:hidden"><div class="abs" style="left:812px;top:800px;width:643px;height:45px;background:#fff;border:1px solid #e4e4e4;"></div>
<div class="abs" style="left:1452px;top:800.5px;width:2.2px;height:44px;background:#6367d8;"></div>
<div class="abs" style="left:780px;top:799.6px;width:24px;height:24px;border-radius:50%;background:#6367d8"></div>
<svg class="abs" style="left:785px;top:804.6px" width="14" height="14" viewBox="0 0 14 14" fill="none" stroke="#fff" stroke-width="1.150" stroke-linecap="round" stroke-linejoin="round"><path d="M3 1.600c-1.400.5-1.300 3.400.7 6.400s4.400 4.300 5.800 3.700c.7-.4.800-1 .3-1.700L8.600 8.800c-.5.100-1 .6-1.500.4C6.200 8.800 4.800 6.600 4.800 5.600c.1-.6.800-.7 1-1.200L4.800 2.200C4.400 1.600 3.700 1.300 3 1.600z"/><path d="M7.400 3.800h5.400M9.200 2l-1.800 1.800 1.800 1.800"/></svg>
<svg class="abs" style="left:808px;top:807.1px" width="6" height="9" viewBox="0 0 6 9"><path d="M5.500 .3L1 4.500l4.500 4.200" fill="#fff" stroke="#dcdcdc" stroke-width="1"/><path d="M5.500 1v7" stroke="#fff" stroke-width="1.200"/></svg>
<div class="t" style="left:828.2px;top:808.00px;font-size:10.5px;color:#0a6ed1;letter-spacing:-0.044px;">Call From: +35840357</div>
<div class="abs" style="left:932px;top:806.1px;width:25px;height:13px;background:linear-gradient(90deg,#e4edf8,#b9d0ee 40%,#b9d0ee 70%,#e4edf8);filter:blur(1.300px);opacity:.95"></div>
<div class="t" style="left:828.2px;top:824.00px;font-size:9px;color:#5b5f63;letter-spacing:-0.072px;">Caller:</div>
<div class="t" style="left:856.2px;top:824.00px;font-size:9px;color:#0a6ed1;letter-spacing:-0.071px;">Mike Smith</div>
<div class="t" style="left:1035.8px;top:824.00px;font-size:9px;color:#5b5f63;letter-spacing:-0.086px;">Agent:</div>
<div class="t" style="left:1064.1px;top:824.00px;font-size:9px;color:#0a6ed1;letter-spacing:-0.041px;">Juliane Beyer</div>
<div class="t" style="left:1243.9px;top:825.00px;font-size:9px;color:#5b5f63;letter-spacing:-0.058px;">Linked Documents</div>
<div class="t" style="left:1322.5px;top:825.00px;font-size:9px;color:#5b5f63;letter-spacing:0.067px;">(0)</div>
<div class="t" style="left:1347.3px;top:815.00px;font-size:9px;color:#6a6d70;letter-spacing:-0.033px;">16.06.2025 | 09:28</div>
<svg class="abs" style="left:1433px;top:815.2px" width="12" height="8" viewBox="0 0 12 8" fill="none" stroke="#0854a0" stroke-width="1.500"><path d="M.8 1.200L6 6.400l5.200-5.200"/></svg>
</div>
<div class="abs" style="left:249px;top:218px;width:514px;height:660px;background:#fff;border:1px solid #cbcbcb;border-radius:4px;box-shadow:0 6px 56px rgba(0,0,0,.24);"></div>
<div class="t" style="left:262.2px;top:230.00px;font-size:10.5px;color:#6a6d70;letter-spacing:-0.204px;">Live Engagements</div>
<div class="abs" style="left:729px;top:238px;width:12px;height:2px;background:#0854a0;"></div>
<div class="abs" style="left:251px;top:248px;width:510px;height:1px;background:#dcdcdc;"></div>
<div class="abs" style="left:262px;top:249px;width:471px;height:1px;background:#e8e8e8;"></div>
<svg class="abs" style="left:267.500px;top:260.500px" width="27" height="26" viewBox="0 0 27 26" fill="none" stroke="#0a6ed1" stroke-width="1.800" stroke-linejoin="round"><rect x="3.200" y="1.200" width="20.600" height="23.200" rx="2"/><path d="M.6 6h4.400M.6 9.500h4.400M.6 16h4.400M.6 19.500h4.400" stroke-width="1.300"/><circle cx="13.600" cy="9.400" r="3.200"/><path d="M8 19c.3-3.600 2.400-5.400 5.600-5.400s5.300 1.800 5.600 4.400z"/></svg>
<div class="t" style="left:292.4px;top:262.00px;font-size:10.5px;color:#32363a;font-weight:bold;letter-spacing:-0.063px;">Smith Decorations Inc. • Mike Smith</div>
<div class="t" style="left:292.4px;top:274.00px;font-size:9px;color:#515559;letter-spacing:-0.255px;">+35840357</div>
<div class="abs" style="left:335px;top:270.500px;width:19px;height:13px;background:#d4d4d4;filter:blur(1.200px)"></div>
<div class="t" style="left:353.8px;top:274.00px;font-size:9px;color:#515559;">2</div>
<svg class="abs" style="left:714px;top:262px" width="10" height="10" viewBox="0 0 10 10" fill="none" stroke="#1d2d3e" stroke-width="1.400"><path d="M1 1l8 8M9 1l-8 8"/></svg>
<div class="abs" style="left:262px;top:296px;width:471px;height:1px;background:#e5e5e5;"></div>
<div class="abs" style="left:275px;top:303.5px;width:43px;height:16px;background:#ebf5eb;border:1px solid #2b7d2b;border-radius:8px;"></div>
<svg class="abs" style="left:282px;top:306.500px" width="9" height="8" viewBox="0 0 9 8" fill="none" stroke="#2b7d2b" stroke-width="1.300"><path d="M1 4l2.400 2.600L8 1"/></svg>
<div class="abs" style="left:298px;top:301.5px;width:20px;height:20px;background:#fff;border:1px solid #2b7d2b;border-radius:50%;"></div>
<div class="t" style="left:325.5px;top:307.00px;font-size:10.5px;color:#1d2d3e;letter-spacing:-0.170px;">Ready</div>
<div class="abs" style="left:480px;top:307px;width:12px;height:11px;background:#fff;border:1px solid #b7c936;"></div>
<svg class="abs" style="left:482px;top:309px" width="8" height="8" viewBox="0 0 8 8" fill="none" stroke="#2b8d2b" stroke-width="1.300"><path d="M.8 4.200l2.200 2.400L7.200 1"/></svg>
<div class="t" style="left:498.7px;top:307.00px;font-size:10.5px;color:#1d2d3e;letter-spacing:-0.046px;">Available</div>
<svg class="abs" style="left:547px;top:310.500px" width="9" height="5" viewBox="0 0 9 5" fill="none" stroke="#1d2d3e" stroke-width="1"><path d="M.6.800L4.500 4l3.900-3.200"/></svg>
<svg class="abs" style="left:681.500px;top:305.500px" width="13" height="12" viewBox="0 0 13 12" fill="none" stroke="#1d2d3e" stroke-width="1.100"><circle cx="5" cy="3.800" r="2.400"/><path d="M.8 11.200c0-3 1.500-4.600 4.200-4.600s4.200 1.600 4.200 4.600z" stroke-linejoin="round"/><path d="M8.600 1h3.800M8.600 2.800h3.800" stroke-width="1"/></svg>
<svg class="abs" style="left:711.500px;top:305.500px" width="13" height="13" viewBox="0 0 13 13" fill="none" stroke="#1d2d3e" stroke-width="1.100"><path d="M3.200 3.600H.6v8.800h8.800V9.800"/><rect x="3.800" y=".6" width="8.600" height="8.600" rx=".8"/><path d="M6.200 6.800l4-4M7.400 2.600h3v3"/></svg>
<div class="abs" style="left:262px;top:326px;width:474px;height:1px;background:#e5e5e5;"></div>
<div class="t" style="left:287.5px;top:339.00px;font-size:10.5px;color:#556b82;letter-spacing:0.098px;">Home</div>
<div class="t" style="left:339.6px;top:339.00px;font-size:10.5px;color:#1d2d3e;letter-spacing:0.007px;">Conversations</div>
<div class="t" style="left:430.9px;top:339.00px;font-size:10.5px;color:#556b82;letter-spacing:-0.095px;">History</div>
<div class="abs" style="left:262px;top:361px;width:35px;height:404px;background:#fff;border-top:1px solid #ececec;"></div>
<div class="abs" style="left:296px;top:361px;width:1px;height:404px;background:#ececec;"></div>
<div class="abs" style="left:297px;top:361px;width:392px;height:364px;background:#f8f8f8;"></div>
<div class="abs" style="left:262px;top:435px;width:34px;height:1px;background:#ececec;"></div>
<div class="abs" style="left:262px;top:472px;width:34px;height:1.5px;background:#e9e9e9;"></div>
<svg class="abs" style="left:273.500px;top:378px" width="13" height="4" viewBox="0 0 13 4" fill="none" stroke="#1d2d3e" stroke-width=".9"><circle cx="1.7" cy="2" r="1.200"/><circle cx="6.5" cy="2" r="1.200"/><circle cx="11.3" cy="2" r="1.200"/></svg>
<div class="abs" style="left:268px;top:407px;width:21px;height:21px;background:#8a1b22;border-radius:50%;"></div>
<svg class="abs" style="left:273.500px;top:411.500px" width="10" height="11" viewBox="0 0 10 11" fill="none" stroke="#fff" stroke-width="1.100" stroke-linejoin="round"><circle cx="5" cy="3" r="2.200"/><path d="M1 10.200c0-3 1.400-4.600 4-4.600s4 1.600 4 4.600z"/></svg>
<svg class="abs" style="left:275px;top:489.500px" width="11" height="6" viewBox="0 0 11 6" fill="none" stroke="#0a6ed1" stroke-width="1.200"><path d="M.6.600L5.500 5l4.900-4.400"/></svg>
<div class="abs" style="left:262px;top:510px;width:34px;height:37px;background:#e5f0fa;border-bottom:1px solid #1d2d3e;"></div>
<div class="abs" style="left:268px;top:519px;width:21px;height:21px;border:1px solid #6a6d70;border-radius:50%;"></div>
<svg class="abs" style="left:273.500px;top:523.500px" width="10" height="11" viewBox="0 0 10 11" fill="none" stroke="#7b7e82" stroke-width="1" stroke-linejoin="round"><circle cx="5" cy="3" r="2.200"/><path d="M1 10.200c0-3 1.400-4.600 4-4.600s4 1.600 4 4.600z"/></svg>
<div class="abs" style="left:323.5px;top:354px;width:277.5px;height:7px;background:#fff;"></div>
<div class="abs" style="left:322.5px;top:361px;width:279.5px;height:289.5px;background:#fff;border:1px solid #c9c9c9;border-top:none;border-radius:0 0 5px 5px;"></div>
<div class="abs" style="left:312px;top:354px;width:11px;height:7px;background:#fff;"></div>
<svg class="abs" style="left:335px;top:364px;overflow:hidden" width="255" height="255" viewBox="52 47 1331 1330"><rect x="52" y="47" width="1331" height="1330" fill="#f2f2f2"/><path d="M338,745 L517,698 L475,885 Q455,880 437,895 L320,1377 L112,1377 Q100,1315 160,1305 L188,1296 Z" fill="#262626"/><path d="M268,590 L330,612 L300,745 Q280,782 230,782 L52,784 L52,684 L102,692 L84,645 Q98,612 122,640 L152,706 L236,700 Z" fill="#f9845b"/><path d="M400,452 L345,462 Q298,480 265,592 L330,614 L345,750 L517,703 L502,500 L487,413 L440,432 Z" fill="#6b3e17"/><path d="M352,380 L432,375 L447,428 L400,455 L358,447 Z" fill="#f9845b"/><circle cx="372" cy="325" r="70" fill="#f9845b"/><circle cx="438" cy="322" r="15" fill="#f9845b"/><circle cx="303" cy="368" r="14" fill="#f9845b"/><circle cx="335" cy="395" r="22" fill="#f9845b"/><path d="M304,338 Q298,255 365,254 Q412,258 422,292 L385,298 Q342,300 336,348 Z" fill="#fbc13a"/><path d="M352,355 Q375,368 398,350" fill="none" stroke="#7a2a10" stroke-width="3"/><rect x="-36" y="-52" width="72" height="104" rx="34" fill="#9a2b04" transform="translate(308,488) rotate(38)"/><path d="M893,830 L1068,770 L1090,900 L1078,1212 L930,1212 Z" fill="#262626"/><path d="M935,1205 L1078,1205 L1075,1290 Q1102,1312 1097,1340 Q1090,1362 1060,1362 L975,1362 L940,1300 Z" fill="#fdbc3b"/><rect x="946" y="898" width="32" height="460" rx="16" fill="#f2f2f2"/><path d="M678,715 L886,710 L905,850 L952,1335 L832,1335 L798,945 Q785,925 772,945 L790,1306 L660,1306 Z" fill="#c6c6c6"/><path d="M678,1306 L792,1306 Q795,1355 740,1360 L678,1360 Z" fill="#262626"/><path d="M836,1327 L950,1327 L978,1377 L836,1377 Z" fill="#262626"/><path d="M465,1170 L565,1170 L548,1345 L490,1345 Z" fill="#9a2b04"/><path d="M595,1170 L695,1170 L670,1345 L612,1345 Z" fill="#9a2b04"/><ellipse cx="512" cy="1378" rx="62" ry="44" fill="#e03e52"/><ellipse cx="650" cy="1378" rx="62" ry="44" fill="#e03e52"/><path d="M700,480 L740,452 L806,455 L842,338 L881,338 L881,712 L678,716 Q700,600 690,520 Z" fill="#03706f"/><path d="M806,90 L806,460 L842,338 L881,338 L886,90 Z" fill="#f9845b"/><rect x="793" y="30" width="99" height="85" rx="28" fill="#f9845b"/><rect x="735" y="395" width="73" height="62" fill="#f9845b"/><circle cx="757" cy="345" r="66" fill="#f9845b"/><circle cx="692" cy="385" r="13" fill="#f9845b"/><circle cx="728" cy="358" r="16" fill="none" stroke="#262626" stroke-width="4"/><circle cx="788" cy="343" r="16" fill="none" stroke="#262626" stroke-width="4"/><path d="M744,354 L772,347" stroke="#262626" stroke-width="4"/><path d="M744,400 Q765,412 786,396" fill="none" stroke="#e2476a" stroke-width="4"/><circle cx="708" cy="422" r="13" fill="none" stroke="#fbc13a" stroke-width="5.500"/><circle cx="832" cy="373" r="13" fill="none" stroke="#fbc13a" stroke-width="5.500"/><path d="M515,672 L680,672 L720,860 L730,1150 Q728,1176 700,1176 L460,1176 Q435,1174 435,1150 L470,860 Z" fill="#e03e52"/><path d="M485,505 L485,350 Q490,270 560,270 Q632,272 635,350 L635,430 L570,505 Z" fill="#262626"/><path d="M527,320 L635,330 L635,400 Q630,440 608,456 L628,507 L543,507 L552,452 Q520,420 527,320Z" fill="#9a2b04"/><path d="M485,350 Q490,270 560,270 Q632,272 635,348 Q590,352 548,306 Q528,335 530,392 Q542,440 556,468 L540,505 L485,505 Z" fill="#262626"/><circle cx="517" cy="405" r="6" fill="#fff"/><path d="M556,392 Q578,408 600,388" fill="none" stroke="#5a1a04" stroke-width="3"/><path d="M545,505 L627,505 Q692,520 700,592 L680,676 L515,676 L491,600 Q495,520 545,505 Z" fill="#fff"/><rect x="-34" y="-54" width="68" height="108" rx="32" fill="#f9845b" transform="translate(673,498) rotate(-38)"/><path d="M881,415 L960,415 Q1040,470 1046,560 Q1020,640 1030,700 L1070,770 L893,834 L881,712 Z" fill="#e03e52"/><path d="M880,247 Q895,225 930,226 Q975,224 1000,248 Q1030,270 1038,310 Q1046,345 1032,372 Q1028,395 1008,398 L1018,340 Q1015,300 987,278 L880,313 Z" fill="#262626"/><circle cx="914" cy="238" r="14" fill="#262626"/><circle cx="953" cy="234" r="14" fill="#262626"/><circle cx="989" cy="248" r="14" fill="#262626"/><circle cx="1016" cy="272" r="14" fill="#262626"/><circle cx="1030" cy="302" r="14" fill="#262626"/><circle cx="1034" cy="336" r="14" fill="#262626"/><circle cx="1027" cy="368" r="14" fill="#262626"/><path d="M880,313 L987,278 Q1015,300 1018,340 Q1018,380 1010,393 Q995,416 960,418 L880,418 Z" fill="#6e1b04"/><circle cx="1016" cy="376" r="10" fill="#e2476a"/><path d="M920,368 Q940,382 962,368" fill="none" stroke="#3a0e02" stroke-width="3"/><path d="M1045,700 L1240,742 L1245,1270 Q1300,1285 1306,1312 Q1304,1340 1275,1340 L1132,1340 L1132,895 Q1120,872 1108,895 L1086,1205 L1076,900 Z" fill="#03706f"/><path d="M975,398 L1130,440 L1155,492 L1197,440 L1240,452 L1383,560 L1383,642 L1345,738 L1280,702 L1320,602 L1240,572 L1240,744 L1045,702 L1030,640 Q1020,600 1046,560 Q1040,480 975,420 Z" fill="#fdbc3b"/><path d="M1128,395 L1217,395 L1197,445 L1155,492 L1130,440 Z" fill="#f9845b"/><circle cx="1172" cy="340" r="68" fill="#f9845b"/><circle cx="1100" cy="350" r="12" fill="#f9845b"/><circle cx="1243" cy="350" r="10" fill="#f9845b"/><path d="M1107,338 Q1104,260 1172,257 Q1240,260 1242,338 L1216,338 Q1216,292 1172,289 Q1130,292 1129,342 Z" fill="#e2476a"/><path d="M1148,378 Q1170,392 1192,376" fill="none" stroke="#e2476a" stroke-width="3.500"/><rect x="-32" y="-50" width="64" height="100" rx="30" fill="#6e1b04" transform="translate(1270,478) rotate(-42)"/><path d="M1282,698 L1346,736 Q1342,792 1310,806 Q1270,800 1240,760 L1246,728 Z" fill="#f9845b"/></svg>
<div class="t" style="left:334.6px;top:622.00px;font-size:10.5px;color:#0000ee;text-decoration:underline;letter-spacing:0.175px;">01KAV193SQ7KBK1Q26XC29SP7D.jpg</div>
<div class="t" style="left:334.6px;top:636.00px;font-size:9.75px;color:#111;font-family:'Liberation Mono',monospace;letter-spacing:0.030px;">60 KB • JPG</div>
<div class="t" style="left:322.5px;top:666.00px;font-size:8px;color:#858585;letter-spacing:0.131px;">Vikas: 3:37:41 PM</div>
<div class="abs" style="left:322.3px;top:675.2px;width:213.5px;height:34.2px;background:#fff;border:1px solid #c6c6c6;border-radius:5px;"></div>
<div class="t" style="left:334.7px;top:681.00px;font-size:10.5px;color:#0000ee;text-decoration:underline;letter-spacing:0.178px;">01KAV1B768VJAF74574WRTTA1S.pdf</div>
<div class="t" style="left:334.7px;top:695.00px;font-size:9.75px;color:#111;font-family:'Liberation Mono',monospace;letter-spacing:0.030px;">32 KB • PDF</div>
<div class="abs" style="left:460px;top:364px;width:5px;height:1px;background:#a5a5a5;"></div>
<div class="abs" style="left:339.6px;top:358px;width:67.2px;height:2px;background:#f7a823;"></div>
<div class="abs" style="left:310px;top:352px;width:305px;height:371.5px;border:2px solid #3a14cc;"></div>
<div class="abs" style="left:689px;top:361px;width:9px;height:364px;background:#fff;"></div>
<div class="abs" style="left:689.2px;top:481px;width:8.7px;height:142.7px;background:#d9dadb;"></div>
<div class="abs" style="left:699px;top:361px;width:37px;height:1px;background:#e9e9e9;"></div>
<div class="abs" style="left:699px;top:361px;width:1px;height:404px;background:#e6e6e6;"></div>
<div class="abs" style="left:700px;top:387px;width:36px;height:1px;background:#efefef;"></div>
<div class="abs" style="left:700px;top:413px;width:36px;height:1px;background:#efefef;"></div>
<div class="abs" style="left:700px;top:440px;width:36px;height:1px;background:#efefef;"></div>
<div class="abs" style="left:700px;top:466px;width:36px;height:1px;background:#efefef;"></div>
<div class="abs" style="left:700px;top:492px;width:36px;height:1px;background:#efefef;"></div>
<div class="abs" style="left:700px;top:518px;width:36px;height:1px;background:#efefef;"></div>
<div class="abs" style="left:700px;top:545px;width:36px;height:1px;background:#efefef;"></div>
<div class="abs" style="left:700px;top:571px;width:36px;height:1px;background:#efefef;"></div>
<div class="abs" style="left:700px;top:597px;width:36px;height:1px;background:#efefef;"></div>
<div class="abs" style="left:700px;top:623px;width:36px;height:1px;background:#efefef;"></div>
<svg class="abs" style="left:711.0px;top:367.3px" width="13" height="13" viewBox="0 0 13 13" fill="none" stroke="#8d9196" stroke-width="1.0" stroke-linejoin="round"><rect x="2.500" y=".6" width="8" height="11.800"/><path d="M4 3.200h1M6 3.200h3.200M4 5.400h1M6 5.400h3.200M4 7.600h1M6 7.600h3.200" stroke-width=".8"/></svg>
<svg class="abs" style="left:711.0px;top:393.6px" width="13" height="13" viewBox="0 0 13 13" fill="none" stroke="#a6a9ad" stroke-width="1.0" stroke-linejoin="round"><path d="M2.400.800L.8 2.400l1.600 1.600M2.600 4.400h7M3.600 6.400h7M4.600 8.400h5M10.600 8.800l1.600 1.600-1.600 1.600" stroke-width=".9"/></svg>
<svg class="abs" style="left:711.0px;top:419.8px" width="13" height="13" viewBox="0 0 13 13" fill="none" stroke="#1d2d3e" stroke-width="1.0" stroke-linejoin="round"><rect x="2.300" y="1.600" width="8.400" height="10.600"/><path d="M2.300 2.400h8.400" stroke-width="1.800"/><path d="M4.400.2v1.400M6.500.2v1.400M8.600.2v1.400" stroke-width="1"/><path d="M6.500 4.800v5M4 7.300h5" stroke-width="1"/></svg>
<svg class="abs" style="left:711.0px;top:446.2px" width="13" height="13" viewBox="0 0 13 13" fill="none" stroke="#8d9196" stroke-width="1.0" stroke-linejoin="round"><path d="M3.400 8.600l5.200-4.400c.8-.7 1.800.4 1 1.200L4.200 10.400c-1.600 1.400-3.600-.7-2-2.200l6-5.200c2-1.700 4.600 1.100 2.600 2.900L6.600 9.600" stroke-width=".9"/></svg>
<svg class="abs" style="left:711.0px;top:472.5px" width="13" height="13" viewBox="0 0 13 13" fill="none" stroke="#8d9196" stroke-width="1.0" stroke-linejoin="round"><path d="M4.200 8.200H3.200C.6 8.200.4 4.800 2.800 4.600 2.800 1.400 6.600 1 7.600 3c2-.8 3.400 1.200 2.600 2.400 2 .2 1.800 2.800-.2 2.800H8.800" stroke-width=".9"/><path d="M6.500 12.400V5.600M4.400 7.600l2.100-2.100 2.100 2.100" stroke-width=".9"/></svg>
<svg class="abs" style="left:711.0px;top:498.8px" width="13" height="13" viewBox="0 0 13 13" fill="none" stroke="#1d2d3e" stroke-width="1.0" stroke-linejoin="round"><circle cx="6.500" cy="6.500" r="5.800"/><circle cx="6.500" cy="5" r="2"/><path d="M2.800 10.800c.4-2.200 1.800-3.200 3.700-3.200s3.300 1 3.700 3.200"/></svg>
<svg class="abs" style="left:711.0px;top:525.0999999999999px" width="13" height="13" viewBox="0 0 13 13" fill="none" stroke="#1d2d3e" stroke-width="1.0" stroke-linejoin="round"><path d="M6 10.400A5 5 0 1 1 10.800 4"/><path d="M5.600 2.400v3.400H2.600" stroke-width=".9"/><circle cx="8.800" cy="6.800" r="1.900"/><path d="M5.600 12.400c0-2.200 1.200-3.400 3.200-3.400s3.200 1.200 3.200 3.400z"/></svg>
<div class="abs" style="left:724.400px;top:523.800px;width:4.800px;height:4.800px;border-radius:50%;background:#fdb833"></div>
<svg class="abs" style="left:711.0px;top:551.3px" width="13" height="13" viewBox="0 0 13 13" fill="none" stroke="#1d2d3e" stroke-width="1.0" stroke-linejoin="round"><path d="M4.200 12.200H1V2h2.200M7.400 2H9.600v2"/><path d="M3.400 1.200h3.800v1.800H3.400z"/><path d="M2.400 5h2" stroke-width="1.600"/><circle cx="8.600" cy="6.400" r="1.900"/><path d="M5.400 12.200c0-2.200 1.200-3.400 3.200-3.400s3.200 1.200 3.200 3.400z"/></svg>
<svg class="abs" style="left:711.0px;top:577.0999999999999px" width="13" height="13" viewBox="0 0 13 13" fill="none" stroke="#1d2d3e" stroke-width="1.0" stroke-linejoin="round"><rect x=".8" y="1.400" width="11.400" height="10"/><path d="M2.800 4.600l.8.800L5 4M6.200 4.800h4M2.800 8l.8.800L5 7.400M6.200 8.200h4" stroke-width=".9"/></svg>
<svg class="abs" style="left:711.0px;top:603.4px" width="13" height="13" viewBox="0 0 13 13" fill="none" stroke="#1d2d3e" stroke-width="1.0" stroke-linejoin="round"><circle cx="5" cy="3" r="2.200"/><path d="M1 9.400c0-2.600 1.400-4 4-4 1.400 0 2.600.6 3.200 1.600M1 9.400h5"/><circle cx="8.800" cy="9" r="1.700"/><path d="M10 10.200l2.400 2.400"/></svg>
<div class="abs" style="left:262px;top:725px;width:436px;height:40px;background:#fff;"></div>
<div class="abs" style="left:296px;top:725px;width:1px;height:40px;background:#ececec;"></div>
<div class="abs" style="left:297px;top:725px;width:401px;height:1px;background:#ececec;"></div>
<div class="abs" style="left:262px;top:765px;width:474px;height:1px;background:#e3e3e3;"></div>
<svg class="abs" style="left:274px;top:739px" width="12" height="10" viewBox="0 0 12 10" fill="none" stroke="#1d2d3e" stroke-width="1.400"><path d="M1 .8L5.400 5 1 9.200M6 .8L10.400 5 6 9.200"/></svg>
<div class="abs" style="left:519px;top:734px;width:24px;height:20px;background:#fff;border:1px solid #1d2d3e;border-radius:3px;"></div>
<svg class="abs" style="left:524.500px;top:737.500px" width="13" height="13" viewBox="0 0 13 13" fill="none" stroke="#1d2d3e" stroke-width="1.100"><path d="M8.800 12H1.600V3.600L4.200 1h4.600v4"/><path d="M4.600 1v3H1.600"/><path d="M6 9.600h6.400"/><path d="M7 5.600c0 1.800 0 2.800 1.200 3.800" stroke-width="1"/></svg>
<div class="abs" style="left:549px;top:734px;width:83px;height:20px;background:#fff;border:1px solid #1d2d3e;border-radius:3px;"></div>
<div class="t" style="left:556.2px;top:739.00px;font-size:10.5px;color:#1d2d3e;letter-spacing:-0.028px;">Send message</div>
<div class="abs" style="left:638px;top:734px;width:53px;height:20px;background:#fff;border:1px solid #1d2d3e;border-radius:3px;"></div>
<div class="t" style="left:651.0px;top:739.00px;font-size:10.5px;color:#1d2d3e;letter-spacing:-0.049px;">Close</div>
<div class="abs" style="left:270px;top:776px;width:231px;height:19px;background:#fff;border:1px solid #c4c4c4;border-radius:2px;"></div>
<div class="t" style="left:278.8px;top:781.00px;font-size:10.5px;color:#c6c6c6;font-style:italic;letter-spacing:-0.021px;">Search queues and agents</div>
<svg class="abs" style="left:482.500px;top:780px" width="12" height="12" viewBox="0 0 12 12" fill="none" stroke="#1d2d3e" stroke-width="1.100"><circle cx="5" cy="5" r="3.800"/><path d="M7.800 7.800l3.200 3.200" stroke-linecap="round"/></svg>
<svg class="abs" style="left:590.1px;top:779.7px" width="13" height="13" viewBox="0 0 13 13" fill="none" stroke="#1d2d3e" stroke-width="1.0" stroke-linejoin="round"><path d="M6.500 1v11M1 6.500h11" stroke-width="1.600"/></svg>
<svg class="abs" style="left:619.7px;top:779.7px" width="13" height="13" viewBox="0 0 13 13" fill="none" stroke="#1d2d3e" stroke-width="1.0" stroke-linejoin="round"><rect x="2.400" y="1.800" width="8.200" height="10.400"/><path d="M4.600.800h3.800v2H4.600z" fill="#1d2d3e"/><path d="M4 5.200h1M6 5.200h3M4 7.400h1M6 7.400h3M4 9.600h1M6 9.600h3" stroke-width=".9"/></svg>
<svg class="abs" style="left:649.9px;top:779.7px" width="13" height="13" viewBox="0 0 13 13" fill="none" stroke="#1d2d3e" stroke-width="1.0" stroke-linejoin="round"><rect x="1.800" y="1" width="9.800" height="11" rx="1"/><path d="M.6 3.400h1.800M.6 6.500h1.800M.6 9.600h1.800M11 3.400h1.600M11 6.500h1.600M11 9.600h1.600" stroke-width=".9"/><circle cx="6.700" cy="6.300" r="2.500" stroke-width=".9"/><circle cx="6.700" cy="6.300" r=".9" stroke-width=".8"/></svg>
<svg class="abs" style="left:680.4px;top:779.7px" width="13" height="13" viewBox="0 0 13 13" fill="none" stroke="#1d2d3e" stroke-width="1.0" stroke-linejoin="round"><path d="M6 10.400A5 5 0 1 1 10.800 4"/><path d="M5.600 2.400v3.400H2.600" stroke-width=".9"/><circle cx="8.800" cy="6.800" r="1.900"/><path d="M5.600 12.400c0-2.200 1.200-3.400 3.200-3.400s3.200 1.200 3.200 3.400z"/></svg>
<svg class="abs" style="left:710.3px;top:779.7px" width="13" height="13" viewBox="0 0 13 13" fill="none" stroke="#1d2d3e" stroke-width="1.0" stroke-linejoin="round"><rect x="1" y="1" width="11" height="11"/><path d="M8.200 1v11"/><path d="M9.800 1v11" stroke="#9aa0a6" stroke-width=".8"/></svg>
<div class="abs" style="left:268px;top:809.5px;width:35px;height:19.5px;background:#fdb833;border-radius:3px;"></div>
<svg class="abs" style="left:276px;top:813.500px" width="12" height="12" viewBox="0 0 12 12" fill="none" stroke="#1d2d3e" stroke-width="1.100"><path d="M.8.800h9.600v7.800H8.200v2.400L5.800 8.600H.8z" stroke-linejoin="round"/><path d="M5.600 2.600v3M5.600 6.600v1" stroke-width="1.200"/></svg>
<div class="t" style="left:290.8px;top:814.00px;font-size:10.5px;color:#1d2d3e;font-weight:bold;">6</div>
<div class="t" style="left:443.0px;top:814.00px;font-size:10.5px;color:#1a1a1a;letter-spacing:-0.015px;">Accepted: 3:17:10 PM</div>
<div class="t" style="left:702.8px;top:814.00px;font-size:10.5px;color:#1d2d3e;letter-spacing:-0.130px;">DEV</div>
<svg class="abs" style="left:696.500px;top:807px" width="11" height="11" viewBox="0 0 11 11" fill="none" stroke="#1d2d3e" stroke-width=".9"><path d="M5.500 .8v9.400M.8 5.500h9.400M4 2.200L5.500.7 7 2.200M4 8.800l1.500 1.500L7 8.800M2.200 4L.7 5.500 2.200 7M8.800 4l1.500 1.500L8.800 7"/></svg>
<div class="abs" style="left:262px;top:834px;width:457px;height:8px;background:#f7f7f7;"></div>
<svg class="abs" style="left:756px;top:855px" width="5" height="5" viewBox="0 0 5 5" fill="#9dbde6"><path d="M5 0v5H0z"/></svg>
<div class="abs" style="left:1484px;top:94px;width:9px;height:767px;background:#fff;"></div>
<div class="abs" style="left:1484px;top:94px;width:9px;height:585px;background:#999;"></div>
<svg class="abs" style="left:0;top:855px" width="6" height="6" viewBox="0 0 6 6"><path d="M0 0Q0 6 6 6H0z" fill="#8e8e8e"/></svg>
<svg class="abs" style="left:1487px;top:855px" width="6" height="6" viewBox="0 0 6 6"><path d="M6 0Q6 6 0 6H6z" fill="#8e8e8e"/></svg>

</body>
</html>
